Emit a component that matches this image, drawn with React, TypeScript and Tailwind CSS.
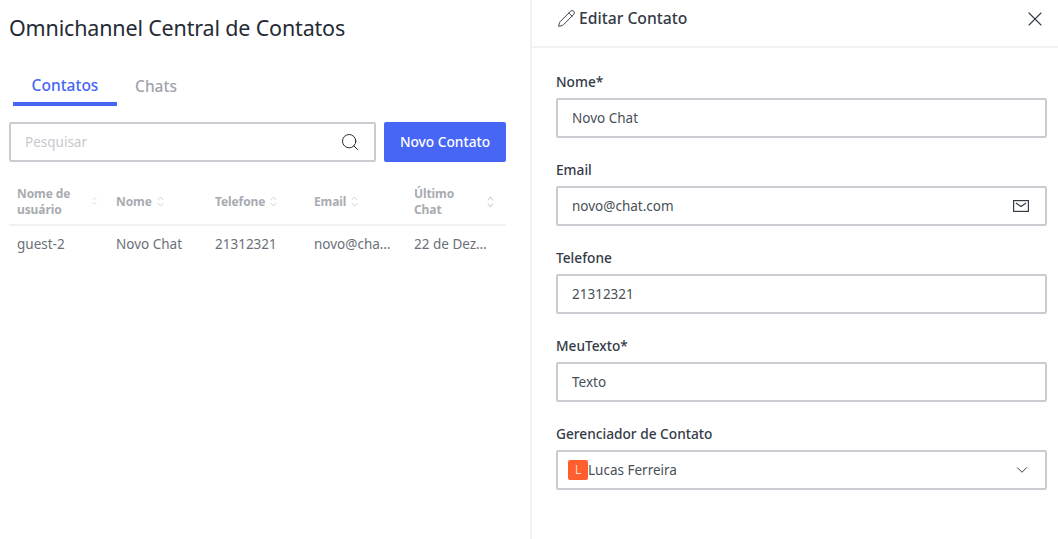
import React from "react";
import { Search, X, Pencil, ChevronDown } from "lucide-react";

function Sort({ w = 7, h = 11 }: { w?: number; h?: number }) {
  return (
    <svg width={w} height={h} viewBox="0 0 7 11" fill="none" stroke="#d0d3d7" strokeWidth="1" preserveAspectRatio="none" className="shrink-0">
      <path d="M0.8 4 L3.5 1 L6.2 4" />
      <path d="M0.8 7 L3.5 10 L6.2 7" />
    </svg>
  );
}

function Field({ label, value, icon }: { label: string; value: string; icon?: React.ReactNode }) {
  return (
    <div className="flex flex-col h-[88px]">
      <div className="h-[26px] text-[13.7px] leading-[20px] font-medium text-[#343a46]">{label}</div>
      <div className="h-[40px] border-2 border-[#c9cdd2] rounded-[2px] flex items-center justify-between pl-[14px] pr-[16px] text-[13.5px] text-[#495057]">
        <span>{value}</span>
        {icon}
      </div>
    </div>
  );
}

export default function App() {
  return (
    <div className="w-[1058px] h-[539px] flex bg-white overflow-hidden font-['Noto_Sans',sans-serif]">
      <div className="w-[530px] shrink-0 pl-[9px] pr-[24px]">
        <h1 className="h-[56px] flex items-center text-[21.5px] font-normal text-[#252b36] tracking-[-0.17px]">Omnichannel Central de Contatos</h1>
        <div className="flex h-[50px] pl-[4px] font-medium">
          <div className="w-[104px] h-[50px] border-b-[4px] border-[#4766f5] text-[#4766f5] text-[15.5px] flex items-center justify-center pt-[14px]">Contatos</div>
          <div className="w-[78px] h-[50px] text-[#a0a4ab] text-[15.5px] flex items-center justify-center pt-[12px]">Chats</div>
        </div>
        <div className="flex gap-[8px] mt-[16px]">
          <div className="w-[367px] h-[40px] border-2 border-[#c9cdd2] rounded-[2px] flex items-center justify-between pl-[14px] pr-[14px] text-[13.5px] text-[#c5c8cd]">
            <span>Pesquisar</span>
            <Search size={20} strokeWidth={1.2} color="#252b36" />
          </div>
          <button className="w-[122px] h-[40px] bg-[#4766f5] rounded-[2px] text-white text-[13.7px] font-medium">Novo Contato</button>
        </div>
        <div className="mt-[22px] grid grid-cols-[99px_99px_99px_100px_100px] text-[12px] leading-[16px] font-bold text-[#a8abb1] h-[42px] border-b-2 border-[#f0f1f2] pl-[8px] w-[497px] tracking-[-0.1px]">
          <div className="flex items-start justify-between pr-[19px] pt-[2px]"><span className="w-[60px]">Nome de usuário</span><span className="mt-[11px]"><Sort w={5} h={8} /></span></div>
          <div className="flex items-start gap-[5px] pt-[10px]"><span>Nome</span><span className="mt-[2px]"><Sort /></span></div>
          <div className="flex items-start gap-[5px] pt-[10px]"><span>Telefone</span><span className="mt-[2px]"><Sort /></span></div>
          <div className="flex items-start gap-[5px] pt-[10px]"><span>Email</span><span className="mt-[2px]"><Sort /></span></div>
          <div className="flex items-start justify-between pr-[20px] pt-[2px]"><span className="w-[45px]">Último Chat</span><span className="mt-[10px]"><Sort h={12} /></span></div>
        </div>
        <div className="grid grid-cols-[99px_99px_99px_100px_100px] text-[13.5px] text-[#6b7078] h-[37px] items-center pl-[8px] w-[497px]">
          <div>guest-2</div>
          <div>Novo Chat</div>
          <div>21312321</div>
          <div className="truncate pr-[19px]">novo@chat.com</div>
          <div className="truncate pr-[20px]">22 de Dezembro</div>
        </div>
      </div>
      <div className="flex-1 border-l-2 border-[#f0f1f2] min-w-0">
        <div className="h-[48px] border-b-2 border-[#f0f1f2] flex items-center justify-between pl-[25px] pr-[11px] pb-[8px]">
          <div className="flex items-center gap-[3px] text-[15.7px] font-medium text-[#343a46]">
            <Pencil size={19} strokeWidth={1.2} color="#343a46" />
            <span>Editar Contato</span>
          </div>
          <X size={24} strokeWidth={1.1} color="#343a46" />
        </div>
        <div className="pl-[24px] pr-[11px] pt-[24px]">
          <Field label="Nome*" value="Novo Chat" />
          <Field label="Email" value="novo@chat.com" icon={
            <svg width="16" height="12" viewBox="0 0 16 12" fill="none" stroke="#343a46" strokeWidth="1.2">
              <rect x="0.6" y="0.6" width="14.8" height="10.8" />
              <path d="M3 3 L8 6.5 L13 3" />
            </svg>
          } />
          <Field label="Telefone" value="21312321" />
          <Field label="MeuTexto*" value="Texto" />
          <div className="flex flex-col">
            <div className="h-[26px] text-[13.7px] leading-[20px] font-medium text-[#343a46]">Gerenciador de Contato</div>
            <div className="h-[40px] border-2 border-[#c9cdd2] rounded-[2px] flex items-center justify-between pl-[10px] pr-[14px] text-[13.5px] text-[#495057]">
              <div className="flex items-center">
                <span className="w-[20px] h-[20px] bg-[#ff5f2e] rounded-[2px] text-white text-[12px] font-light flex items-center justify-center">L</span>
                <span>Lucas Ferreira</span>
              </div>
              <ChevronDown size={18} strokeWidth={1.3} color="#343a46" />
            </div>
          </div>
        </div>
      </div>
    </div>
  );
}
